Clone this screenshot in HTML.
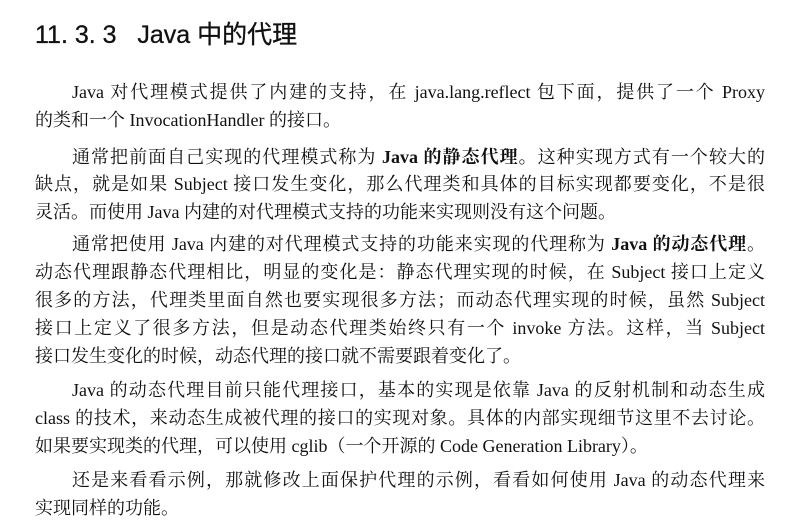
<!DOCTYPE html>
<html><head><meta charset="utf-8"><style>
body{margin:0;width:798px;height:529px;background:#fff;position:relative;overflow:hidden;color:#111}
.h{position:absolute;left:35px;top:17px;font:25px "Liberation Sans","Noto Sans CJK SC",sans-serif;line-height:36px;white-space:nowrap;-webkit-text-stroke:0.3px #111}
.l{position:absolute;line-height:24px;height:24px;font-family:"Liberation Serif","Noto Serif CJK SC",serif;font-size:18px;white-space:nowrap;text-align:justify;text-align-last:justify;text-justify:inter-character}
.f{left:35px;width:730px}
.i{left:72px;width:693px}
.e{text-align-last:left}
b{font-weight:bold}
</style></head><body>
<div class="h">11. 3. 3&nbsp;&nbsp;&nbsp;Java 中的代理</div>
<div class="l i" style="top:80px">Java 对代理模式提供了内建的支持，在 java.lang.reflect 包下面，提供了一个 Proxy</div>
<div class="l f e" style="top:108px">的类和一个 InvocationHandler 的接口。</div>
<div class="l i" style="top:145px">通常把前面自己实现的代理模式称为 <b>Java 的静态代理</b>。这种实现方式有一个较大的</div>
<div class="l f" style="top:172px">缺点，就是如果 Subject 接口发生变化，那么代理类和具体的目标实现都要变化，不是很</div>
<div class="l f e" style="top:200px">灵活。而使用 Java 内建的对代理模式支持的功能来实现则没有这个问题。</div>
<div class="l i" style="top:232px">通常把使用 Java 内建的对代理模式支持的功能来实现的代理称为 <b>Java 的动态代理</b>。</div>
<div class="l f" style="top:260px">动态代理跟静态代理相比，明显的变化是：静态代理实现的时候，在 Subject 接口上定义</div>
<div class="l f" style="top:288px">很多的方法，代理类里面自然也要实现很多方法；而动态代理实现的时候，虽然 Subject</div>
<div class="l f" style="top:316px">接口上定义了很多方法，但是动态代理类始终只有一个 invoke 方法。这样，当 Subject</div>
<div class="l f e" style="top:344px">接口发生变化的时候，动态代理的接口就不需要跟着变化了。</div>
<div class="l i" style="top:378px">Java 的动态代理目前只能代理接口，基本的实现是依靠 Java 的反射机制和动态生成</div>
<div class="l f" style="top:406px">class 的技术，来动态生成被代理的接口的实现对象。具体的内部实现细节这里不去讨论。</div>
<div class="l f e" style="top:434px">如果要实现类的代理，可以使用 cglib（一个开源的 Code Generation Library）。</div>
<div class="l i" style="top:468px">还是来看看示例，那就修改上面保护代理的示例，看看如何使用 Java 的动态代理来</div>
<div class="l f e" style="top:496px">实现同样的功能。</div>
</body></html>
